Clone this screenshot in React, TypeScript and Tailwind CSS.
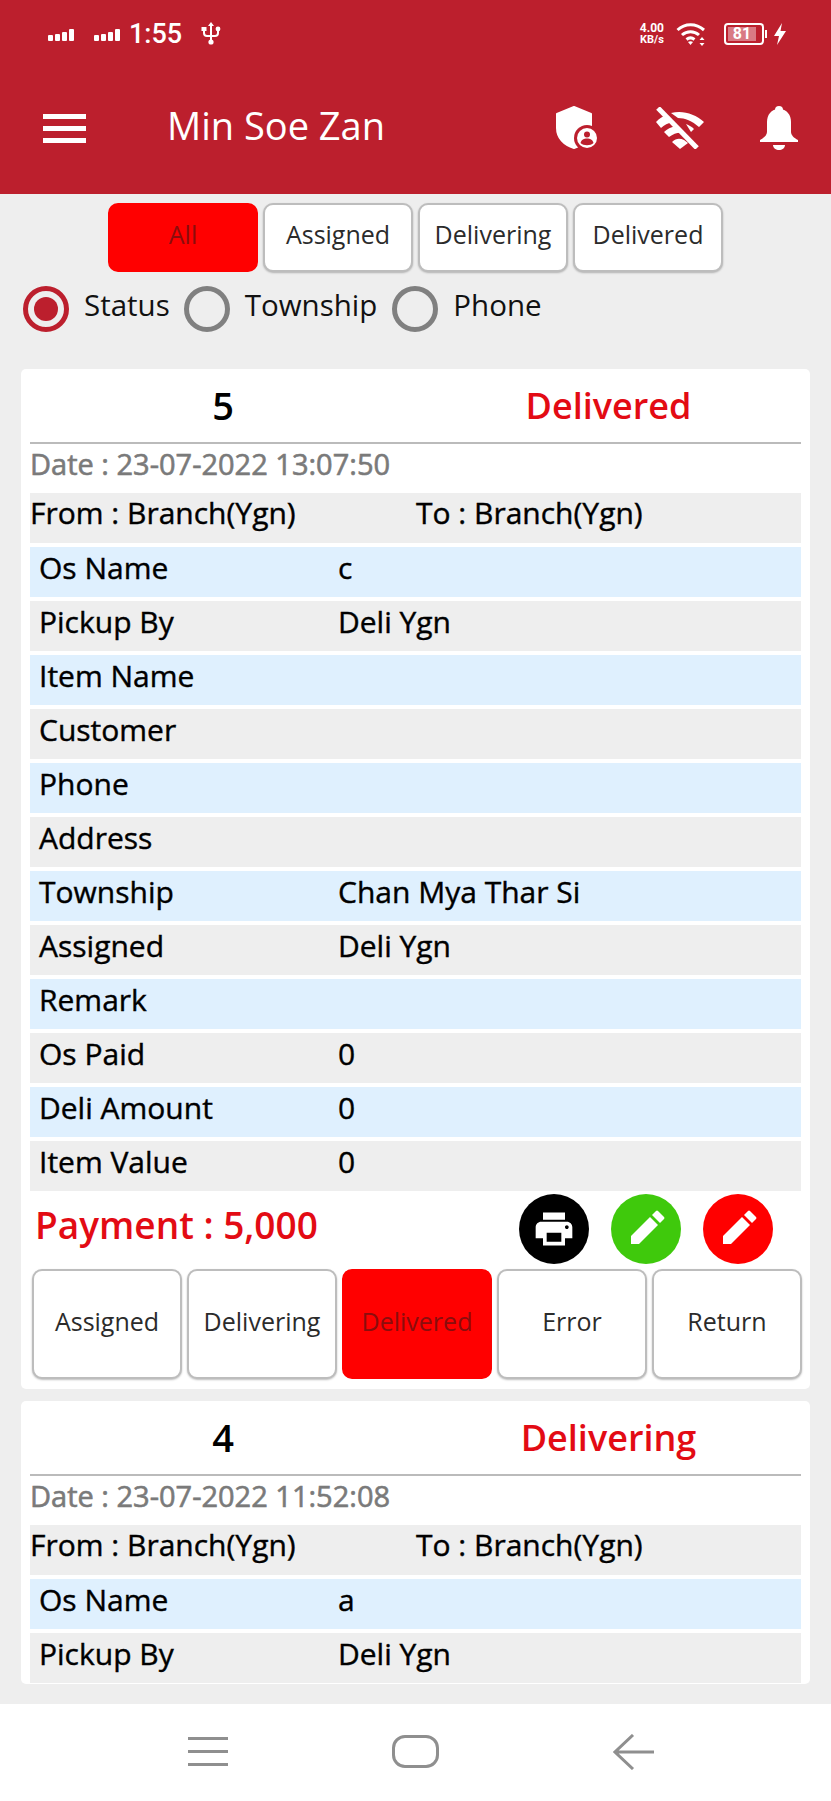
const sans = "font-['Open_Sans','Noto_Sans',sans-serif]";

const PRINT_PATH =
  "M19 8H5c-1.66 0-3 1.34-3 3v6h4v4h12v-4h4v-6c0-1.66-1.34-3-3-3zm-3 11H8v-5h8v5zm3-7c-.55 0-1-.45-1-1s.45-1 1-1 1 .45 1 1-.45 1-1 1zm-1-9H6v4h12V3z";

const SignalBars = () => (
  <svg width="28" height="14" viewBox="0 0 28 14" fill="white">
    <rect x="0" y="8" width="5" height="6" rx="1" />
    <rect x="7" y="7" width="5" height="7" rx="1" />
    <rect x="14" y="5" width="5" height="9" rx="1" />
    <rect x="21" y="2" width="5" height="12" rx="1" />
  </svg>
);

const UsbIcon = () => (
  <svg width="20" height="24" viewBox="0 0 20 24" fill="none" stroke="white" strokeWidth="2">
    <path d="M10 3v17M3 8v3c0 2 1 3 3 3h8c2 0 3-1 3-3V8" />
    <path d="M10 0l3 4H7z" fill="white" stroke="none" />
    <circle cx="10" cy="20" r="2.6" fill="white" stroke="none" />
    <rect x="0.5" y="5" width="5" height="4" fill="white" stroke="none" />
    <circle cx="17" cy="7" r="2.4" fill="white" stroke="none" />
  </svg>
);

const StatusWifi = () => (
  <svg width="30" height="24" viewBox="0 0 30 24" fill="none" stroke="white" strokeWidth="3">
    <path d="M1.5 8C9 1 20 1 28 8" />
    <path d="M6 13c5-4.500 12-4.500 17 0" />
    <path d="M10.500 17.500c2.500-2 5.500-2 8 0" />
    <path d="M12 20l2.500 3 2.500-3c-1.500-1-3.500-1-5 0z" fill="white" stroke="none" />
    <path d="M26 15l2.500 3h-5zM26 24l-2.500-3h5z" fill="white" stroke="none" />
  </svg>
);

const ShieldUser = () => (
  <svg width="44" height="44" viewBox="0 0 44 44">
    <path d="M19 1 L36 8 V22 C36 32 29 39 19 42 C9 39 2 32 2 22 V8 Z" fill="white" stroke="white" strokeLinejoin="round" strokeWidth="2" />
    <circle cx="32" cy="32" r="13" fill="#bc1f2d" />
    <circle cx="32" cy="32" r="10" fill="white" />
    <circle cx="32" cy="28.500" r="3" fill="#bc1f2d" />
    <path d="M25.500 37c1-3.500 3.500-4.500 6.500-4.500s5.500 1 6.500 4.500c-1.500 1.500-4 2.200-6.500 2.200s-5-.7-6.500-2.200z" fill="#bc1f2d" />
  </svg>
);

const WifiOff = () => (
  <svg width="52" height="42" viewBox="0 0 52 42" fill="none" stroke="white">
    <path d="M3 15 C7 11 10 9 13 8 L20 15 C15 16 11 18 8 21 Z" fill="white" stroke="none" />
    <path d="M18 6 C30 3 42 7 51 15 L46 20 C39 14 32 11 25 11 Z" fill="white" stroke="none" />
    <path d="M11 25 C14 22 18 20 23 19 L30 26 C26 25 21 26 16 30 Z" fill="white" stroke="none" />
    <path d="M33 17 C36 18 39 20 41 22 L38 25 Z" fill="white" stroke="none" />
    <path d="M19 35 C23 31 27 31 31 33 L35 36 L27 42 Z" fill="white" stroke="none" />
    <path d="M5 1 L44 41" strokeWidth="5" />
  </svg>
);

const Bell = () => (
  <svg width="38" height="46" viewBox="0 0 38 46" fill="white">
    <circle cx="19" cy="5" r="4" />
    <path d="M19 4c-8 0-12 6-12 13v10c0 3-3 6-7 8v2h38v-2c-4-2-7-5-7-8V17c0-7-4-13-12-13z" />
    <path d="M13 40h12c0 3-3 5-6 5s-6-2-6-5z" />
  </svg>
);

const PencilIcon = () => (
  <svg width="38" height="38" viewBox="0 0 38 38" fill="white">
    <path d="M4 26 L23 7 L31 15 L12 34 L4 34 Z" />
    <path d="M25 5 L29 1 Q30 0 31 1 L37 7 Q38 8 37 9 L33 13 Z" />
  </svg>
);

const Radio = ({ checked }: { checked?: boolean }) => (
  <span
    className={`flex h-[46px] w-[46px] shrink-0 items-center justify-center rounded-full border-[5px] ${
      checked ? "border-[#bc1f2d]" : "border-[#808080]"
    }`}
  >
    {checked && <span className="h-[24px] w-[24px] rounded-full bg-[#bc1f2d]" />}
  </span>
);

const StatusButton = ({ label, active, tall }: { label: string; active?: boolean; tall?: boolean }) => (
  <button
    className={`flex w-[150px] justify-center rounded-[10px] border-[2px] text-[25px] ${
      tall ? "h-[110px] pt-[32px]" : "h-[69px] pt-[11px]"
    } ${
      active
        ? "border-[#ff0000] bg-[#ff0000] text-[#8a0d0d]"
        : "border-[#bdbdbd] bg-white text-[#2b2b2b] shadow-[0_1px_2px_rgba(0,0,0,0.25)]"
    }`}
  >
    <span className="leading-[36px]">{label}</span>
  </button>
);

const Row = ({ label, value, blue }: { label: string; value?: string; blue?: boolean }) => (
  <div
    className={`flex h-[50px] items-center pb-[9px] pl-[9px] text-[30px] text-black [-webkit-text-stroke:0.4px_black] ${
      blue ? "bg-[#dff0fe]" : "bg-[#eeeeee]"
    }`}
  >
    <span className="w-[299px]">{label}</span>
    <span>{value}</span>
  </div>
);

const Heading = ({ id, status, date }: { id: string; status: string; date: string }) => (
  <>
    <div className="flex h-[73px] items-center">
      <span className="w-[404px] text-center text-[38px] font-semibold text-black">{id}</span>
      <span className="w-[367px] text-center text-[36px] font-semibold leading-none text-[#e30b14]">{status}</span>
    </div>
    <div className="mx-[9px] h-[2px] bg-[#bbbbbb]" />
    <div className="flex h-[49px] items-center pb-[10px] pl-[9px] text-[29px] text-[#7a7a7a] [-webkit-text-stroke:0.6px_#7a7a7a]">Date : {date}</div>
    <div className="mx-[9px] flex h-[50px] items-center bg-[#eeeeee] pb-[11px] text-[30px] text-black [-webkit-text-stroke:0.4px_black]">
      <span className="w-[386px]">From : Branch(Ygn)</span>
      <span>To : Branch(Ygn)</span>
    </div>
  </>
);

const firstRows: [string, string][] = [
  ["Os Name", "c"],
  ["Pickup By", "Deli Ygn"],
  ["Item Name", ""],
  ["Customer", ""],
  ["Phone", ""],
  ["Address", ""],
  ["Township", "Chan Mya Thar Si"],
  ["Assigned", "Deli Ygn"],
  ["Remark", ""],
  ["Os Paid", "0"],
  ["Deli Amount", "0"],
  ["Item Value", "0"],
];

const App = () => {
  return (
    <div className={`flex h-[1801px] w-[831px] flex-col overflow-hidden bg-[#eeeeee] ${sans}`}>
      <header className="h-[194px] shrink-0 bg-[#bc1f2d] text-white">
        <div className="flex h-[68px] items-center justify-between pl-[48px] pr-[45px] font-['Roboto',sans-serif]">
          <div className="flex items-center">
            <SignalBars />
            <span className="ml-[18px]"><SignalBars /></span>
            <span className="ml-[7px] text-[27px] font-medium leading-none">1:55</span>
            <span className="ml-[19px]"><UsbIcon /></span>
          </div>
          <div className="flex items-center">
            <div className="flex flex-col items-center text-[11px] font-bold leading-[11px]">
              <span className="text-[12px]">4.00</span>
              <span>KB/s</span>
            </div>
            <span className="ml-[12px]"><StatusWifi /></span>
            <div className="relative ml-[18px] flex h-[22px] w-[40px] items-center rounded-[4px] border-[2px] border-white p-[2px]">
              <div className="flex h-full w-[28px] items-center justify-center bg-[#d97a84] text-[16px] font-bold leading-none">81</div>
            </div>
            <span className="ml-[1px] h-[8px] w-[2px] bg-white" />
            <svg className="ml-[7px]" width="12" height="22" viewBox="0 0 12 22" fill="white">
              <path d="M8 0L0 13h5l-2 9 9-14H6.500z" />
            </svg>
          </div>
        </div>
        <div className="flex h-[114px] items-center">
          <div className="ml-[43px] mt-[7px] flex w-[43px] flex-col gap-[7px]">
            <span className="h-[5px] bg-white" />
            <span className="h-[5px] bg-white" />
            <span className="h-[5px] bg-white" />
          </div>
          <span className="ml-[81px] pb-[1px] text-[38px] font-normal leading-none">Min Soe Zan</span>
          <div className="ml-auto mr-[33px] flex items-center pt-[6px]">
            <span className="mr-[54px]"><ShieldUser /></span>
            <span className="mr-[55px]"><WifiOff /></span>
            <Bell />
          </div>
        </div>
      </header>

      <main className="min-h-0 flex-1 overflow-hidden">
        <div className="flex justify-start gap-[5px] pl-[108px] pt-[9px]">
          <StatusButton label="All" active />
          <StatusButton label="Assigned" />
          <StatusButton label="Delivering" />
          <StatusButton label="Delivered" />
        </div>

        <div className="mt-[14px] flex items-center pl-[23px] text-[29.5px] leading-none text-[#111]">
          <Radio checked />
          <span className="ml-[15px] mr-[14px] -translate-y-[4px]">Status</span>
          <Radio />
          <span className="ml-[15px] mr-[15px] -translate-y-[4px]">Township</span>
          <Radio />
          <span className="ml-[15px] -translate-y-[4px]">Phone</span>
        </div>

        <section className="ml-[21px] mt-[37px] h-[1020px] w-[789px] rounded-[5px] bg-white">
          <Heading id="5" status="Delivered" date="23-07-2022 13:07:50" />
          <div className="mx-[9px] mt-[4px] flex flex-col gap-[4px]">
            {firstRows.map(([label, value], index) => (
              <Row key={label} label={label} value={value} blue={index % 2 === 0} />
            ))}
          </div>
          <div className="mx-[11px] flex h-[78px] items-center">
            <span className="pb-[11px] pl-[3px] text-[37px] font-semibold leading-none text-[#e30b14]">Payment : 5,000</span>
            <div className="ml-auto mr-[26px] flex gap-[22px] pb-[3px]">
              <span className="flex h-[70px] w-[70px] items-center justify-center rounded-full bg-black">
                <svg width="44" height="44" viewBox="0 0 24 24" fill="white"><path d={PRINT_PATH} /></svg>
              </span>
              <span className="flex h-[70px] w-[70px] items-center justify-center rounded-full bg-[#3fc90c]">
                <PencilIcon />
              </span>
              <span className="flex h-[70px] w-[70px] items-center justify-center rounded-full bg-[#ff0000]">
                <PencilIcon />
              </span>
            </div>
          </div>
          <div className="ml-[11px] flex gap-[5px]">
            <StatusButton label="Assigned" tall />
            <StatusButton label="Delivering" tall />
            <StatusButton label="Delivered" active tall />
            <StatusButton label="Error" tall />
            <StatusButton label="Return" tall />
          </div>
        </section>

        <section className="ml-[21px] mt-[12px] h-[283px] w-[789px] rounded-[5px] bg-white">
          <Heading id="4" status="Delivering" date="23-07-2022 11:52:08" />
          <div className="mx-[9px] mt-[4px] flex flex-col gap-[4px]">
            <Row label="Os Name" value="a" blue />
            <Row label="Pickup By" value="Deli Ygn" />
          </div>
        </section>
      </main>

      <nav className="flex h-[97px] shrink-0 items-center bg-white pb-[2px]">
        <div className="ml-[188px] flex w-[40px] flex-col gap-[10px]">
          <span className="h-[3px] bg-[#8f8f8f]" />
          <span className="h-[3px] bg-[#8f8f8f]" />
          <span className="h-[3px] bg-[#8f8f8f]" />
        </div>
        <span className="ml-[164px] h-[33px] w-[47px] rounded-[13px] border-[3px] border-[#8f8f8f]" />
        <svg className="ml-[174px]" width="42" height="36" viewBox="0 0 42 36" fill="none" stroke="#8f8f8f" strokeWidth="3">
          <path d="M20 1 L2 18 L20 35 M2 18 H41" />
        </svg>
      </nav>
    </div>
  );
};

export default App;
